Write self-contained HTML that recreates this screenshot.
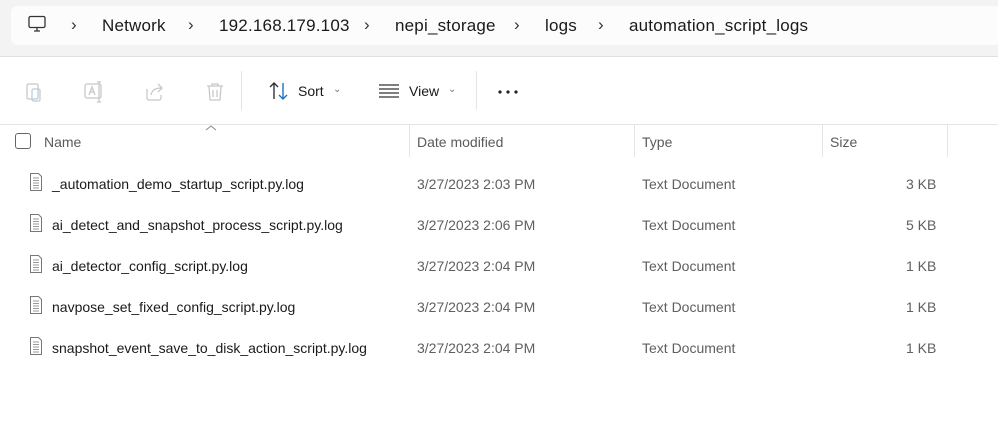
<!DOCTYPE html>
<html><head><style>
body{margin:0;width:998px;height:421px;background:#fff;font-family:"Liberation Sans",sans-serif;position:relative;overflow:hidden}
.top{position:absolute;left:0;top:0;width:998px;height:56px;background:#f3f3f3;border-bottom:1px solid #e0e0e0}
.crumb{position:absolute;left:11px;top:6px;width:995px;height:39px;background:#fcfcfc;border-radius:6px}
.t{position:absolute;white-space:nowrap}
.bc{font-size:17px;color:#1a1a1a;top:16px;letter-spacing:0.2px}
.ch{font-size:17px;color:#333;top:15px}
.tb{font-size:14px;color:#1a1a1a;top:83px}
.hl{position:absolute;top:124px;left:0;width:998px;height:1px;background:#e5e5e5}
.hd{font-size:14px;color:#5a5a5a;top:134px}
.vs{position:absolute;top:125px;width:1px;height:32px;background:#e5e5e5}
.n{font-size:14px;color:#1a1a1a}
.g{font-size:14px;color:#5f5f5f}
</style></head><body>
<div class="top"><div class="crumb"></div></div>
<svg class="t" style="left:27px;top:14px" width="20" height="20" viewBox="0 0 20 20"><rect x="2" y="2.5" width="16" height="11" rx="1.5" fill="none" stroke="#333" stroke-width="1.3"/><path d="M7 17h6M10 13.5v3.5" stroke="#333" stroke-width="1.3"/></svg>
<span class="t ch" style="left:71px">›</span>
<span class="t bc" style="left:102px">Network</span>
<span class="t ch" style="left:188px">›</span>
<span class="t bc" style="left:219px">192.168.179.103</span>
<span class="t ch" style="left:364px">›</span>
<span class="t bc" style="left:395px">nepi_storage</span>
<span class="t ch" style="left:514px">›</span>
<span class="t bc" style="left:545px">logs</span>
<span class="t ch" style="left:598px">›</span>
<span class="t bc" style="left:629px">automation_script_logs</span>
<svg class="t" style="left:24px;top:80px" width="24" height="24" viewBox="0 0 24 24" fill="none" stroke="#c8c8c8" stroke-width="1.3"><rect x="3" y="4" width="11" height="15" rx="1.5"/><rect x="8" y="9" width="8" height="12" rx="1.5" stroke="#b8cde0"/></svg>
<svg class="t" style="left:83px;top:80px" width="24" height="24" viewBox="0 0 24 24" fill="none" stroke="#c8c8c8" stroke-width="1.3"><rect x="2" y="4" width="16" height="14" rx="2"/><path d="M6 15l3-8 3 8M7 12h4M16 2v20M14 2h4M14 22h4"/></svg>
<svg class="t" style="left:143px;top:80px" width="24" height="24" viewBox="0 0 24 24" fill="none" stroke="#c8c8c8" stroke-width="1.3"><path d="M4 9v9a2 2 0 002 2h10a2 2 0 002-2v-3"/><path d="M8 15c1-5 5-7 10-7M15 4l4 4-4 4"/></svg>
<svg class="t" style="left:203px;top:80px" width="24" height="24" viewBox="0 0 24 24" fill="none" stroke="#c8c8c8" stroke-width="1.3"><path d="M4 6h16M9 6V4h6v2M6 6l1 14h10l1-14M10 10v7M14 10v7"/></svg>
<div style="position:absolute;left:241px;top:71px;width:1px;height:39px;background:#e5e5e5"></div>
<svg class="t" style="left:267px;top:80px" width="24" height="22" viewBox="0 0 24 22" fill="none" stroke-width="1.4"><path d="M7 19V3M3 7l4-4 4 4" stroke="#333"/><path d="M16 3v16M12 15l4 4 4-4" stroke="#1a73c8"/></svg>
<span class="t tb" style="left:298px">Sort</span>
<span class="t" style="left:333px;top:84px;font-size:10px;color:#777">⌄</span>
<svg class="t" style="left:378px;top:83px" width="22" height="16" viewBox="0 0 22 16" stroke="#333" stroke-width="1.2"><path d="M1 2h20M1 6h20M1 10h20M1 14h20"/></svg>
<span class="t tb" style="left:409px">View</span>
<span class="t" style="left:448px;top:84px;font-size:10px;color:#777">⌄</span>
<div style="position:absolute;left:476px;top:71px;width:1px;height:39px;background:#e5e5e5"></div>
<svg class="t" style="left:497px;top:89px" width="22" height="6"><circle cx="3" cy="3" r="1.6" fill="#222"/><circle cx="11" cy="3" r="1.6" fill="#222"/><circle cx="19" cy="3" r="1.6" fill="#222"/></svg>
<div class="hl"></div>
<svg class="t" style="left:205px;top:124px" width="12" height="7"><path d="M1 6l5-4 5 4" fill="none" stroke="#888"/></svg>
<div style="position:absolute;left:15px;top:133px;width:14px;height:14px;border:1px solid #666;border-radius:3px"></div>
<span class="t hd" style="left:44px">Name</span>
<div class="vs" style="left:409px"></div>
<span class="t hd" style="left:417px">Date modified</span>
<div class="vs" style="left:634px"></div>
<span class="t hd" style="left:642px">Type</span>
<div class="vs" style="left:822px"></div>
<span class="t hd" style="left:830px">Size</span>
<div class="vs" style="left:947px"></div>
<svg width="0" height="0" style="position:absolute"><defs><g id="fi"><path d="M1.5 0.5h8l3 3v14h-11z" fill="#fff" stroke="#777"/><path d="M4 5h6M4 7.5h6M4 10h6M4 12.5h6M4 15h6" stroke="#999" stroke-width="0.9"/></g></defs></svg>

<svg class="t" style="left:29px;top:173px" width="14" height="19"><use href="#fi"/></svg>
<span class="t n" style="left:52px;top:176px">_automation_demo_startup_script.py.log</span>
<span class="t g" style="left:417px;top:176px">3/27/2023 2:03 PM</span>
<span class="t g" style="left:642px;top:176px">Text Document</span>
<span class="t g" style="left:906px;top:176px">3 KB</span>

<svg class="t" style="left:29px;top:214px" width="14" height="19"><use href="#fi"/></svg>
<span class="t n" style="left:52px;top:217px">ai_detect_and_snapshot_process_script.py.log</span>
<span class="t g" style="left:417px;top:217px">3/27/2023 2:06 PM</span>
<span class="t g" style="left:642px;top:217px">Text Document</span>
<span class="t g" style="left:906px;top:217px">5 KB</span>

<svg class="t" style="left:29px;top:255px" width="14" height="19"><use href="#fi"/></svg>
<span class="t n" style="left:52px;top:258px">ai_detector_config_script.py.log</span>
<span class="t g" style="left:417px;top:258px">3/27/2023 2:04 PM</span>
<span class="t g" style="left:642px;top:258px">Text Document</span>
<span class="t g" style="left:906px;top:258px">1 KB</span>

<svg class="t" style="left:29px;top:296px" width="14" height="19"><use href="#fi"/></svg>
<span class="t n" style="left:52px;top:299px">navpose_set_fixed_config_script.py.log</span>
<span class="t g" style="left:417px;top:299px">3/27/2023 2:04 PM</span>
<span class="t g" style="left:642px;top:299px">Text Document</span>
<span class="t g" style="left:906px;top:299px">1 KB</span>

<svg class="t" style="left:29px;top:337px" width="14" height="19"><use href="#fi"/></svg>
<span class="t n" style="left:52px;top:340px">snapshot_event_save_to_disk_action_script.py.log</span>
<span class="t g" style="left:417px;top:340px">3/27/2023 2:04 PM</span>
<span class="t g" style="left:642px;top:340px">Text Document</span>
<span class="t g" style="left:906px;top:340px">1 KB</span>
</body></html>
